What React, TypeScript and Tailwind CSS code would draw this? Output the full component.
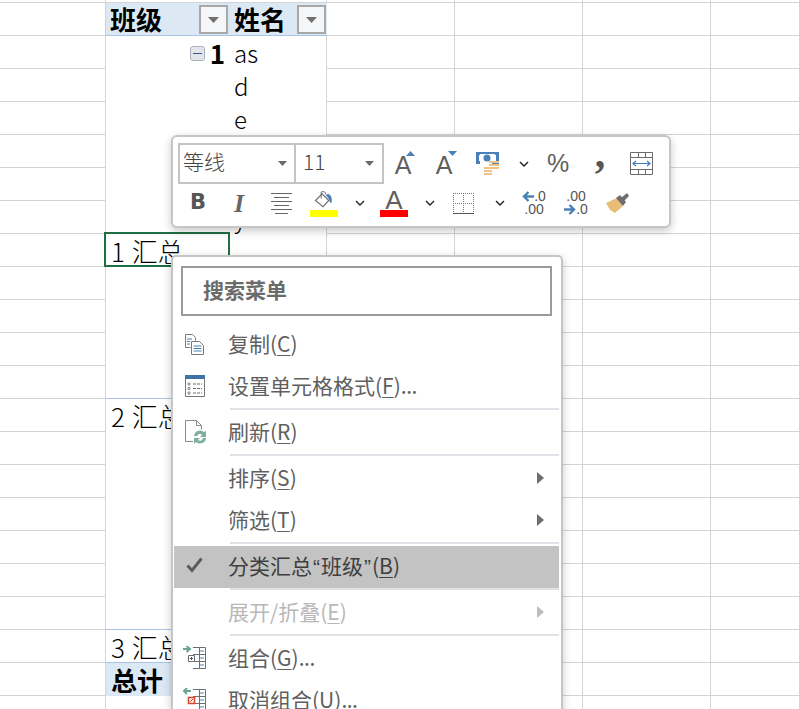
import React from "react";

const line = "border-[#d4d4d4]";

const Chevron = () => (
  <svg width="10" height="6" viewBox="0 0 10 6" fill="none">
    <path d="M1 1l4 4 4-4" stroke="#222" strokeWidth="1.4" />
  </svg>
);

const Caret = () => (
  <svg width="9" height="5" viewBox="0 0 9 5">
    <path d="M0 0h9L4.500 5z" fill="#6a6a6a" />
  </svg>
);

const FilterButton = () => (
  <div className="w-[29px] h-[29px] border-2 border-[#a8a8a8] bg-[#f5f6f8] flex items-center justify-center">
    <svg width="11" height="6" viewBox="0 0 11 6">
      <path d="M0 0h11L5.500 6z" fill="#707070" />
    </svg>
  </div>
);

const CollapseBox = () => (
  <div className="w-[15px] h-[15px] rounded-[3px] border border-[#aab2bd] bg-[#e3e5e9] flex items-center justify-center">
    <div className="w-[9px] h-[1px] bg-[#3c5a8c]" />
  </div>
);

const GrowFont = ({ down }: { down?: boolean }) => (
  <div className="relative w-[17px] h-[28px] flex items-end justify-center">
    <span className="text-[25px] leading-[25px] font-medium text-[#5f5f5f] font-['Liberation_Sans',sans-serif]">A</span>
    <svg className={`absolute top-[1px] ${down ? "left-[12px]" : "left-[11px]"}`} width="9" height="6" viewBox="0 0 9 6">
      <path d={down ? "M0 0h9L4.500 5z" : "M0 5h9L4.500 0z"} fill="#4a80b8" />
    </svg>
  </div>
);

const MoneyIcon = () => (
  <svg width="24" height="24" viewBox="0 0 24 24">
    <path d="M0 0h23v12h-7v-1h4V3h-1V2H4v1H3v6h1v3H0z" fill="#4a80b8" />
    <circle cx="11" cy="6" r="3.500" fill="#4a80b8" />
    <path d="M13 9h10v2H13zM13 12h10v2H13zM13 15h10v2H13zM8 15h8v2H8zM8 18h8v2H8zM8 21h8v2H8z" fill="#eec386" />
  </svg>
);

const WidthIcon = () => (
  <svg width="23" height="23" viewBox="0 0 23 23" fill="none">
    <path d="M.5.500h22v22H.5zM0 5.500h23M0 17.500h23M8.500 0v5M15.500 0v5M8.500 18v5M15.500 18v5" stroke="#6c6c6c" />
    <path d="M3 11.500h17M6 9l-3 2.500L6 14M17 9l3 2.500L17 14" stroke="#3f7dbb" strokeWidth="1.200" />
  </svg>
);

const AlignIcon = () => (
  <svg width="21" height="21" viewBox="0 0 21 21" fill="none">
    <path d="M0 .500h21M3 4.500h15M0 8.500h21M3 12.500h15M0 16.500h21M4 20.500h13" stroke="#666" />
  </svg>
);

const FillIcon = () => (
  <svg width="20" height="19" viewBox="0 0 20 20" fill="none">
    <path d="M1 10l7-7 7 7-6 6.500z" stroke="#6d6d6d" strokeWidth="1.200" fill="#fff" />
    <path d="M7 1v7" stroke="#6d6d6d" />
    <path d="M7 1c3-1 5 0 5 3" stroke="#6d6d6d" />
    <path d="M14 3c3 1 5 4 4 9-1 1-2 0-2-1-1-3-2-5-4-6z" fill="#4a80b8" />
  </svg>
);

const BorderIcon = () => (
  <svg width="21" height="21" viewBox="0 0 21 21" fill="none">
    <path d="M.5 0v20M10.500 0v20M20.500 0v20M0 .500h21M0 10.500h21" stroke="#777" strokeDasharray="1 1" />
    <path d="M0 20.500h21" stroke="#555" />
  </svg>
);

const BrushIcon = () => (
  <svg width="24" height="20" viewBox="0 0 24 20">
    <path d="M0 10l11-5 6 8-8 7-5-3z" fill="#e8bd77" />
    <path d="M10 5l4-3 6 7-3 4z" fill="#6d6d6d" />
    <path d="M15 5l6-5 2 3-5 5z" fill="#6d6d6d" />
  </svg>
);

const ArrowLeft = () => (
  <svg width="12" height="11" viewBox="0 0 12 11" fill="none">
    <path d="M12 5.500H2M6.500 1L2 5.500 6.500 10" stroke="#4a80b8" strokeWidth="2.400" />
  </svg>
);

const ArrowRight = () => (
  <svg width="12" height="11" viewBox="0 0 12 11" fill="none">
    <path d="M0 5.500h10M5.500 1L10 5.500 5.500 10" stroke="#4a80b8" strokeWidth="2.400" />
  </svg>
);

const CopyIcon = () => (
  <svg width="20" height="21" viewBox="0 0 20 21" fill="none">
    <path d="M.5.500h7l3 3v3M.5.500v13h5" stroke="#7a7a7a" />
    <path d="M2 5h5M2 7.500h3M2 10h3" stroke="#4a80b8" />
    <path d="M6.500 7.500h8l4 4v9h-12z" stroke="#7a7a7a" fill="#fff" />
    <path d="M8.500 12h8M8.500 14.500h8M8.500 17h8" stroke="#4a80b8" />
  </svg>
);

const FormatIcon = () => (
  <svg width="20" height="22" viewBox="0 0 20 22" fill="none">
    <path d="M.5 3.500h19v18H.5z" stroke="#777" />
    <path d="M0 0h20v4H0z" fill="#3f71aa" />
    <path d="M3 8h2v2H3zM3 12.500h2v2H3zM3 17h2v2H3z" stroke="#777" strokeWidth=".8" />
    <path d="M8 9h9M8 13.500h9M8 18h9" stroke="#666" strokeDasharray="3 1" />
  </svg>
);

const RefreshIcon = () => (
  <svg width="23" height="25" viewBox="0 0 23 25" fill="none">
    <path d="M8 21.500H.5V.500h11l5 5v4M11.500.500v5h5" stroke="#8a8a8a" />
    <path d="M9 16a6 6 0 0 1 10-4l2-1v6h-6l2-2a3 3 0 0 0-5 1zM21 18a6 6 0 0 1-10 4l-2 2v-6h6l-2 2a3 3 0 0 0 5-2z" fill="#7fb09d" />
  </svg>
);

const CheckIcon = () => (
  <svg className="-mt-[2px]" width="17" height="16" viewBox="0 0 17 16" fill="none">
    <path d="M1.500 8.500L6 13.500 15.500 1.500" stroke="#5c5c5c" strokeWidth="3" />
  </svg>
);

const GroupIcon = ({ ungroup }: { ungroup?: boolean }) => (
  <svg className="-ml-[3px]" width="25" height="24" viewBox="0 0 25 24" fill="none">
    <path d={ungroup ? "M9 3H2M5 0L2 3l3 3" : "M1 3h6M4.500 0L8 3 4.500 6"} stroke="#6ba58f" strokeWidth="2" />
    <path d="M11 1.500h12.500v21H11M17.500 1.500v21M11 8.500h12.500M11 15.500h12.500" stroke="#6e6e6e" />
    <path d="M18 5h4M18 12h4M18 19h4" stroke="#4a80b8" />
    <path d="M6.500 9.500h6v6h-6z" stroke={ungroup ? "#d9472b" : "#6e6e6e"} fill="#fff" strokeWidth={ungroup ? 1.600 : 1} />
    <path d={ungroup ? "M8 14l3-3" : "M8 12.500h3M9.500 11v3"} stroke={ungroup ? "#d9472b" : "#555"} />
  </svg>
);

const SubArrow = ({ muted }: { muted?: boolean }) => (
  <svg className="ml-auto mr-[17px]" width="7" height="12" viewBox="0 0 7 12">
    <path d="M0 0l7 6-7 6z" fill={muted ? "#bdbdbd" : "#6e6e6e"} />
  </svg>
);

const Toolbar = () => (
  <div className="absolute left-[171px] top-[135px] w-[500px] h-[93px] bg-white border-2 border-[#c6c6c6] rounded-[6px] shadow-[0_3px_9px_rgba(0,0,0,0.22)] pl-[5px] pt-[6px]">
    <div className="flex h-[41px] items-center">
      <div className="w-[118px] h-[41px] border-2 border-[#c4c4c4] flex items-center justify-between pl-[3px] pr-[7px] text-[21px] text-[#444]">
        <span className="font-light -mt-[3px]">等线</span>
        <Caret />
      </div>
      <div className="w-[88px] h-[41px] border-2 border-l-0 border-[#c4c4c4] flex items-center justify-between pl-[7px] pr-[8px] text-[21px] text-[#444]">
        <span className="font-light -mt-[3px]">11</span>
        <Caret />
      </div>
      <div className="w-[38px] flex justify-center"><GrowFont /></div>
      <div className="w-[44px] flex justify-center"><GrowFont down /></div>
      <div className="w-[43px] flex justify-center"><MoneyIcon /></div>
      <div className="w-[30px] flex justify-center"><Chevron /></div>
      <div className="w-[38px] flex justify-center text-[25px] text-[#5f5f5f] font-['Liberation_Sans',sans-serif]">%</div>
      <div className="w-[46px] flex justify-center text-[42px] leading-[26px] h-[34px] -mt-[14px] font-bold text-[#555] font-['Liberation_Serif',serif]">,</div>
      <div className="w-[36px] flex justify-center"><WidthIcon /></div>
    </div>
    <div className="flex h-[38px] items-center">
      <div className="w-[40px] flex justify-center text-[21px] font-bold text-[#555] font-['DejaVu_Sans',sans-serif]">B</div>
      <div className="w-[42px] flex justify-center text-[26px] font-bold italic text-[#666] font-['Liberation_Serif',serif]">I</div>
      <div className="w-[42px] flex justify-center"><AlignIcon /></div>
      <div className="w-[44px] flex flex-col items-center mt-[2px]">
        <FillIcon />
        <div className="w-[28px] h-[7px] bg-[#ffff00]" />
      </div>
      <div className="w-[28px] flex justify-center"><Chevron /></div>
      <div className="w-[40px] flex flex-col items-center mt-[2px]">
        <span className="text-[26px] leading-[19px] h-[19px] text-[#5f5f5f] font-['Liberation_Sans',sans-serif]">A</span>
        <div className="w-[28px] h-[7px] bg-[#ff0000]" />
      </div>
      <div className="w-[32px] flex justify-center"><Chevron /></div>
      <div className="w-[34px] flex justify-center"><BorderIcon /></div>
      <div className="w-[40px] flex justify-center"><Chevron /></div>
      <div className="w-[28px] flex flex-col items-center text-[14px] leading-[13px] text-[#555] font-['Liberation_Sans',sans-serif]">
        <div className="flex items-center whitespace-nowrap"><ArrowLeft />.0</div>
        <div>.00</div>
      </div>
      <div className="w-[56px] flex flex-col items-center text-[14px] leading-[13px] text-[#555] font-['Liberation_Sans',sans-serif]">
        <div>.00</div>
        <div className="flex items-center whitespace-nowrap"><ArrowRight />.0</div>
      </div>
      <div className="w-[28px] flex justify-center"><BrushIcon /></div>
    </div>
  </div>
);

const Sep = () => (
  <div className="h-[4px] ml-[57px] mr-[2px]">
    <div className="h-[2px] bg-[#dfe3e7]" />
  </div>
);

type ItemProps = {
  icon?: React.ReactNode;
  children: React.ReactNode;
  arrow?: boolean;
  muted?: boolean;
  active?: boolean;
};

const Item = ({ icon, children, arrow, muted, active }: ItemProps) => (
  <div
    className={`flex items-center h-[42px] pb-[2px] text-[21px] whitespace-nowrap ${
      active ? "bg-[#c3c3c3] text-[#3f3f3f] ml-[1px] mr-[2px]" : muted ? "text-[#b8b8b8]" : "text-[#606060]"
    }`}
  >
    <div className={`${active ? "w-[54px]" : "w-[55px]"} pl-[12px] flex items-center`}>{icon}</div>
    <span>{children}</span>
    {arrow && <SubArrow muted={muted} />}
  </div>
);

const Key = ({ children }: { children: React.ReactNode }) => (
  <u className="underline-offset-[3px] decoration-1">{children}</u>
);

const Dots = () => <span className="tracking-[-0.5px]">...</span>;

const Quote = ({ children }: { children: React.ReactNode }) => (
  <span className="px-[1px] font-['Liberation_Sans',sans-serif]">{children}</span>
);

const ContextMenu = () => (
  <div className="absolute left-[171px] top-[255px] w-[392px] h-[470px] bg-white border-2 border-[#c6c6c6] rounded-[5px] shadow-[0_3px_9px_rgba(0,0,0,0.22)] pt-[9px]">
    <div className="ml-[8px] mr-[9px] h-[50px] border-2 border-[#9a9a9a] flex items-center pl-[20px] pb-[2px] text-[21px] font-bold text-[#6b6b6b]">
      搜索菜单
    </div>
    <div className="h-[8px]" />
    <Item icon={<CopyIcon />}>复制(<Key>C</Key>)</Item>
    <Item icon={<FormatIcon />}>设置单元格格式(<Key>F</Key>)<Dots /></Item>
    <Sep />
    <Item icon={<RefreshIcon />}>刷新(<Key>R</Key>)</Item>
    <Sep />
    <Item arrow>排序(<Key>S</Key>)</Item>
    <Item arrow>筛选(<Key>T</Key>)</Item>
    <Sep />
    <Item active icon={<CheckIcon />}>
      分类汇总<Quote>“</Quote>班级<Quote>”</Quote>(<Key>B</Key>)
    </Item>
    <Sep />
    <Item arrow muted>展开/折叠(<Key>E</Key>)</Item>
    <Sep />
    <Item icon={<GroupIcon />}>组合(<Key>G</Key>)<Dots /></Item>
    <Item icon={<GroupIcon ungroup />}>取消组合(<Key>U</Key>)<Dots /></Item>
  </div>
);

type RowData = {
  label?: string;
  name?: string;
  blueBottom?: boolean;
  outline?: boolean;
  collapse?: boolean;
  total?: boolean;
};

const rows: RowData[] = [
  { name: "as", collapse: true },
  { name: "d" },
  { name: "e" },
  {},
  {},
  { name: "y" },
  { label: "1 汇总", outline: true },
  {},
  {},
  {},
  { blueBottom: true },
  { label: "2 汇总" },
  {},
  {},
  {},
  {},
  {},
  { blueBottom: true },
  { label: "3 汇总", blueBottom: true },
  { label: "总计", total: true },
  {},
];

const PlainCells = () => (
  <>
    <div className={`w-[128px] border-r border-b ${line}`} />
    <div className={`w-[128px] border-r border-b ${line}`} />
    <div className={`w-[128px] border-r border-b ${line}`} />
    <div className={`flex-1 border-b ${line}`} />
  </>
);

const SheetRow = ({ row }: { row: RowData }) => (
  <div className="flex h-[33px] leading-[32px] text-black">
    <div className={`w-[106px] border-r border-b ${line}`} />
    <div
      className={`w-[221px] flex border-r ${line} ${
        row.blueBottom ? "border-b border-b-[#a9c4e4]" : row.total ? "bg-[#dce9f5]" : ""
      }`}
    >
      <div
        className={`relative w-[123px] pl-[5px] pt-[1px] text-[26px] [word-spacing:1px] whitespace-nowrap ${row.total ? "font-bold" : "font-light"}`}
      >
        {row.label}
        {row.collapse && (
          <div className="flex items-center justify-end gap-[5px] h-[32px] pr-[4px]">
            <CollapseBox />
            <span className="font-bold">1</span>
          </div>
        )}
        {row.outline && (
          <div className="absolute -left-[2px] -top-[2px] w-[126px] h-[35px] border-2 border-[#1f6e43]" />
        )}
      </div>
      <div className="pl-[5px] pt-[1px] text-[24px] font-light">{row.name}</div>
    </div>
    <PlainCells />
  </div>
);

export default function App() {
  return (
    <div className="relative w-[799px] h-[709px] overflow-hidden bg-white font-['Noto_Sans_CJK_SC','Noto_Sans',sans-serif]">
      <div className="flex h-[3px]">
        <div className={`w-[106px] border-r border-b ${line}`} />
        <div className={`w-[221px] border-r border-b ${line}`} />
        <PlainCells />
      </div>
      <div className="flex h-[33px]">
        <div className={`w-[106px] border-r border-b ${line}`} />
        <div className="w-[221px] flex bg-[#dce9f5] border-b border-[#a9c4e4] text-[26px] font-bold text-black leading-[32px]">
          <div className="w-[123px] flex justify-between pl-[4px] pr-[1px]">
            <span>班级</span>
            <div className="pt-[2px]"><FilterButton /></div>
          </div>
          <div className="flex-1 flex justify-between pl-[5px] pr-[1px]">
            <span>姓名</span>
            <div className="pt-[2px]"><FilterButton /></div>
          </div>
        </div>
        <PlainCells />
      </div>
      {rows.map((row, i) => (
        <SheetRow key={i} row={row} />
      ))}
      <Toolbar />
      <ContextMenu />
    </div>
  );
}
